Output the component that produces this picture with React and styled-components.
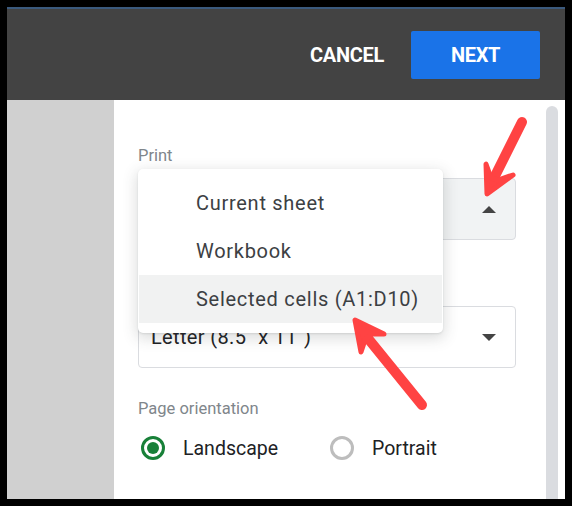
import styled, { createGlobalStyle } from "styled-components";

const GlobalStyle = createGlobalStyle`
  html, body { margin: 0; padding: 0; background: #000; }
  body { font-family: Roboto, "Liberation Sans", sans-serif; }
`;

const Frame = styled.div`
  position: relative;
  width: 572px;
  height: 506px;
  box-sizing: border-box;
  padding: 7px;
  background: #000;
  overflow: hidden;
`;

const Window = styled.div`
  display: flex;
  flex-direction: column;
  height: 492px;
  width: 558px;
  background: #fff;
`;

const Header = styled.div`
  display: flex;
  align-items: center;
  justify-content: flex-end;
  gap: 27px;
  height: 93px;
  flex: none;
  box-sizing: border-box;
  padding: 0 25px 0 0;
  background: #434343;
  border-top: 2px solid #3b5a7e;
`;

const CancelButton = styled.div`
  color: #fff;
  font-size: 20px;
  font-weight: 700;
  letter-spacing: -0.3px;
`;

const NextButton = styled.div`
  display: flex;
  align-items: center;
  justify-content: center;
  width: 129px;
  height: 48px;
  border-radius: 2px;
  background: #1a73e8;
  color: #fff;
  font-size: 20px;
  font-weight: 700;
  letter-spacing: -0.3px;
`;

const Body = styled.div`
  display: flex;
  flex: 1;
  min-height: 0;
`;

const Sidebar = styled.div`
  width: 107px;
  flex: none;
  background: #d0d0d0;
`;

const Content = styled.div`
  flex: 1;
  box-sizing: border-box;
  padding: 47px 30px 0 24px;
`;

const FieldLabel = styled.div`
  color: #80868b;
  font-size: 16.5px;
  line-height: 18px;
  margin-bottom: ${(p) => p.$gap}px;
`;

const SelectBox = styled.div`
  position: relative;
  display: flex;
  align-items: center;
  justify-content: space-between;
  box-sizing: border-box;
  width: 378px;
  height: 62px;
  padding: 0 19px 0 12px;
  border: 1px solid #dadce0;
  border-radius: 4px;
  background: ${(p) => (p.$open ? "#f1f3f4" : "#fff")};
  margin-bottom: ${(p) => p.$gap}px;
  color: #202124;
  font-size: 20px;
  letter-spacing: 0.35px;
`;

const CoveredMark = styled.span`
  color: transparent;
`;

const Caret = styled.span`
  width: 0;
  height: 0;
  border-left: 7px solid transparent;
  border-right: 7px solid transparent;
  ${(p) => (p.$up ? "border-bottom: 7px solid #444;" : "border-top: 7px solid #444;")}
  margin-left: auto;
`;

const Menu = styled.div`
  position: absolute;
  left: 138px;
  top: 169px;
  width: 305px;
  height: 164px;
  box-sizing: border-box;
  padding: 10px 0;
  border-radius: 5px;
  background: #fff;
  box-shadow: 0 4px 14px 2px rgba(60, 64, 67, 0.17), 0 1px 2px rgba(60, 64, 67, 0.12);
  z-index: 2;
`;

const MenuItem = styled.div`
  display: flex;
  align-items: center;
  height: 48px;
  padding-left: 57px;
  margin: 0 1px;
  background: ${(p) => (p.$active ? "#f1f2f2" : "transparent")};
  color: #3c4043;
  font-size: 20px;
  letter-spacing: 0.72px;
`;

const RadioRow = styled.div`
  display: flex;
  align-items: center;
  height: 26px;
  padding-left: 3px;
`;

const RadioOption = styled.div`
  display: flex;
  align-items: center;
  gap: 18px;
  margin-right: 52px;
  color: #202124;
  font-size: 19.5px;
`;

const RadioDot = styled.span`
  display: flex;
  align-items: center;
  justify-content: center;
  width: 24px;
  height: 24px;
  box-sizing: border-box;
  border-radius: 50%;
  border: 3px solid ${(p) => (p.$on ? "#188038" : "#bdbdbd")};
  &::after {
    content: "";
    width: 12px;
    height: 12px;
    border-radius: 50%;
    background: ${(p) => (p.$on ? "#188038" : "transparent")};
  }
`;

const ScrollTrack = styled.div`
  width: 19px;
  flex: none;
  padding: 6px 0 0 0;
  box-sizing: border-box;
`;

const ScrollThumb = styled.div`
  width: 12px;
  height: 100%;
  border-radius: 6px 6px 0 0;
  background: #dadce0;
`;

const Arrows = styled.svg`
  position: absolute;
  left: 0;
  top: 0;
  z-index: 3;
  pointer-events: none;
`;

function App() {
  return (
    <Frame>
      <GlobalStyle />
      <Window>
        <Header>
          <CancelButton>CANCEL</CancelButton>
          <NextButton>NEXT</NextButton>
        </Header>
        <Body>
          <Sidebar />
          <Content>
            <FieldLabel $gap={13}>Print</FieldLabel>
            <SelectBox $open $gap={66}>
              <Caret $up />
            </SelectBox>
            <SelectBox $gap={32}>
              <span>
                Letter (8.5<CoveredMark>"</CoveredMark> x 11<CoveredMark>"</CoveredMark>)
              </span>
              <Caret />
            </SelectBox>
            <FieldLabel $gap={17}>Page orientation</FieldLabel>
            <RadioRow>
              <RadioOption>
                <RadioDot $on />
                Landscape
              </RadioOption>
              <RadioOption>
                <RadioDot />
                Portrait
              </RadioOption>
            </RadioRow>
          </Content>
          <ScrollTrack>
            <ScrollThumb />
          </ScrollTrack>
        </Body>
      </Window>
      <Menu>
        <MenuItem>Current sheet</MenuItem>
        <MenuItem>Workbook</MenuItem>
        <MenuItem $active>Selected cells (A1:D10)</MenuItem>
      </Menu>
      <Arrows width="572" height="506" viewBox="0 0 572 506" fill="#ff4343" stroke="#ff4343" strokeLinecap="round" strokeLinejoin="round">
        <path d="M522 122 L492 182" strokeWidth="10" />
        <path d="M486 164 L487 194 L513 175 L498 180 L491 178 Z" strokeWidth="5" />
        <path d="M422 405 L366 336" strokeWidth="10" />
        <path d="M355 320 L361 352 L365 340 L372 334 L384 334 Z" strokeWidth="5" />
      </Arrows>
    </Frame>
  );
}

export default App;
